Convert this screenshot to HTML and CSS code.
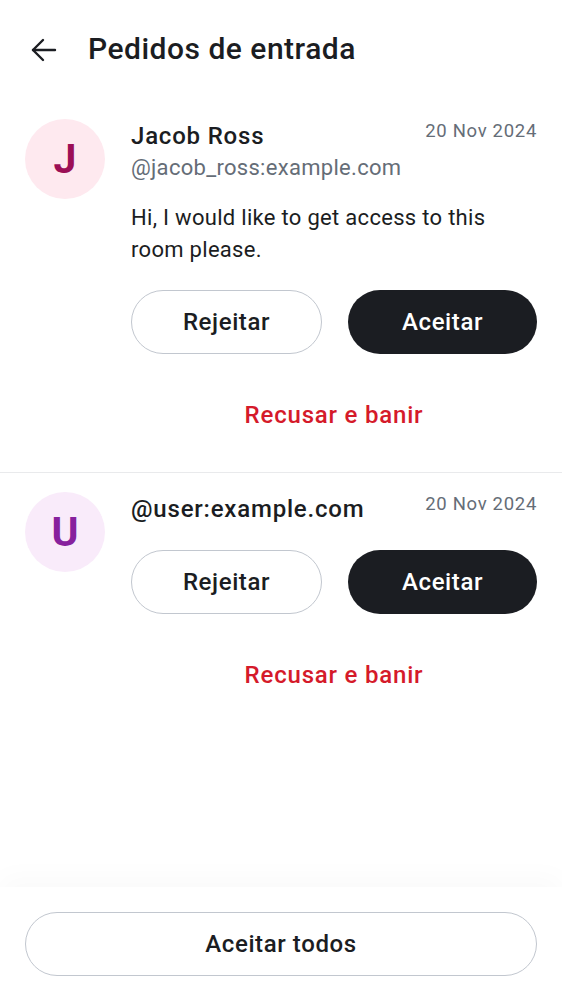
FILE: index.html
```html
<!DOCTYPE html>
<html lang="pt">
<head>
<meta charset="utf-8">
<title>Pedidos de entrada</title>
<link rel="stylesheet" href="styles.css">
</head>
<body>
<div class="screen">
  <header class="topbar">
    <button class="back" aria-label="Voltar">
      <svg width="26" height="24" viewBox="0 0 26 24" fill="none" stroke="#1b1d22" stroke-width="2.4" stroke-linecap="round" stroke-linejoin="round">
        <path d="M2 12H24"/>
        <path d="M12 2L2 12L12 22"/>
      </svg>
    </button>
    <h1 class="title">Pedidos de entrada</h1>
  </header>

  <main class="list">
    <section class="request">
      <div class="avatar avatar-pink">J</div>
      <div class="body">
        <div class="row">
          <span class="name">Jacob Ross</span>
          <span class="date">20 Nov 2024</span>
        </div>
        <div class="handle">@jacob_ross:example.com</div>
        <p class="message">Hi, I would like to get access to this room please.</p>
        <div class="actions">
          <button class="btn btn-outline">Rejeitar</button>
          <button class="btn btn-filled">Aceitar</button>
        </div>
        <button class="ban">Recusar e banir</button>
      </div>
    </section>

    <section class="request">
      <div class="avatar avatar-purple">U</div>
      <div class="body">
        <div class="row">
          <span class="name">@user:example.com</span>
          <span class="date">20 Nov 2024</span>
        </div>
        <div class="actions actions-compact">
          <button class="btn btn-outline">Rejeitar</button>
          <button class="btn btn-filled">Aceitar</button>
        </div>
        <button class="ban">Recusar e banir</button>
      </div>
    </section>
  </main>

  <footer class="bottombar">
    <button class="btn btn-outline btn-wide">Aceitar todos</button>
  </footer>
</div>
</body>
</html>
```

FILE: styles.css
```css
* { box-sizing: border-box; }

html, body {
  margin: 0;
  padding: 0;
  background: #ffffff;
}

body {
  font-family: Roboto, "Noto Sans", "Liberation Sans", sans-serif;
  color: #1b1d22;
}

.screen {
  height: 1000px;
  display: flex;
  flex-direction: column;
}

.topbar {
  height: 100px;
  display: flex;
  align-items: center;
  padding-left: 20px;
}

.back {
  width: 48px;
  height: 48px;
  border: 0;
  padding: 0;
  background: none;
  display: flex;
  align-items: center;
  justify-content: center;
  margin-right: 20px;
  margin-top: -1px;
}

.title {
  margin: 0;
  font-size: 30px;
  font-weight: 500;
  letter-spacing: 0.5px;
  line-height: 36px;
  margin-top: -2px;
}

.list {
  flex: 1;
}

.request {
  display: flex;
  gap: 26px;
  padding: 19px 25px 0 25px;
  border-bottom: 1px solid #e9eaec;
}

.request:last-child {
  border-bottom: 0;
}

.avatar {
  width: 80px;
  height: 80px;
  flex: none;
  border-radius: 50%;
  display: flex;
  align-items: center;
  justify-content: center;
  font-size: 41px;
  font-weight: 700;
}

.avatar-pink {
  background: #fee9ef;
  color: #9c0f56;
}

.avatar-purple {
  background: #f9ebfa;
  color: #87219d;
}

.body {
  flex: 1;
  min-width: 0;
  margin-top: 2px;
  display: flex;
  flex-direction: column;
}

.row {
  display: flex;
  justify-content: space-between;
  align-items: flex-start;
}

.name {
  font-size: 24px;
  font-weight: 500;
  line-height: 30px;
  letter-spacing: 0.8px;
}

.date {
  font-size: 18.5px;
  line-height: 20px;
  color: #656d77;
  letter-spacing: 0.7px;
}

.handle {
  margin-top: 2px;
  font-size: 22px;
  line-height: 30px;
  color: #656d77;
  letter-spacing: 0.3px;
}

.message {
  margin: 19px 0 0 0;
  font-size: 22px;
  line-height: 32px;
  letter-spacing: 0.3px;
}

.actions {
  margin-top: 24px;
  display: flex;
  gap: 26px;
}

.actions-compact {
  margin-top: 26px;
}

.btn {
  flex: 1;
  height: 64px;
  border-radius: 32px;
  font-family: inherit;
  font-size: 24px;
  font-weight: 500;
  letter-spacing: 0.6px;
  cursor: pointer;
}

.btn-outline {
  background: #ffffff;
  color: #1b1d22;
  border: 1.5px solid #c2c7cf;
}

.btn-filled {
  background: #1b1d22;
  color: #ffffff;
  border: 0;
}

.ban {
  margin: 29px 0 25px 0;
  height: 64px;
  border: 0;
  background: none;
  font-family: inherit;
  font-size: 24px;
  font-weight: 500;
  color: #d51a2a;
  letter-spacing: 0.8px;
}

.bottombar {
  height: 113px;
  padding: 25px 25px 24px 25px;
  background: #ffffff;
  box-shadow: 0 -10px 26px rgba(0, 0, 0, 0.025);
}

.btn-wide {
  width: 100%;
  height: 64px;
}
```
